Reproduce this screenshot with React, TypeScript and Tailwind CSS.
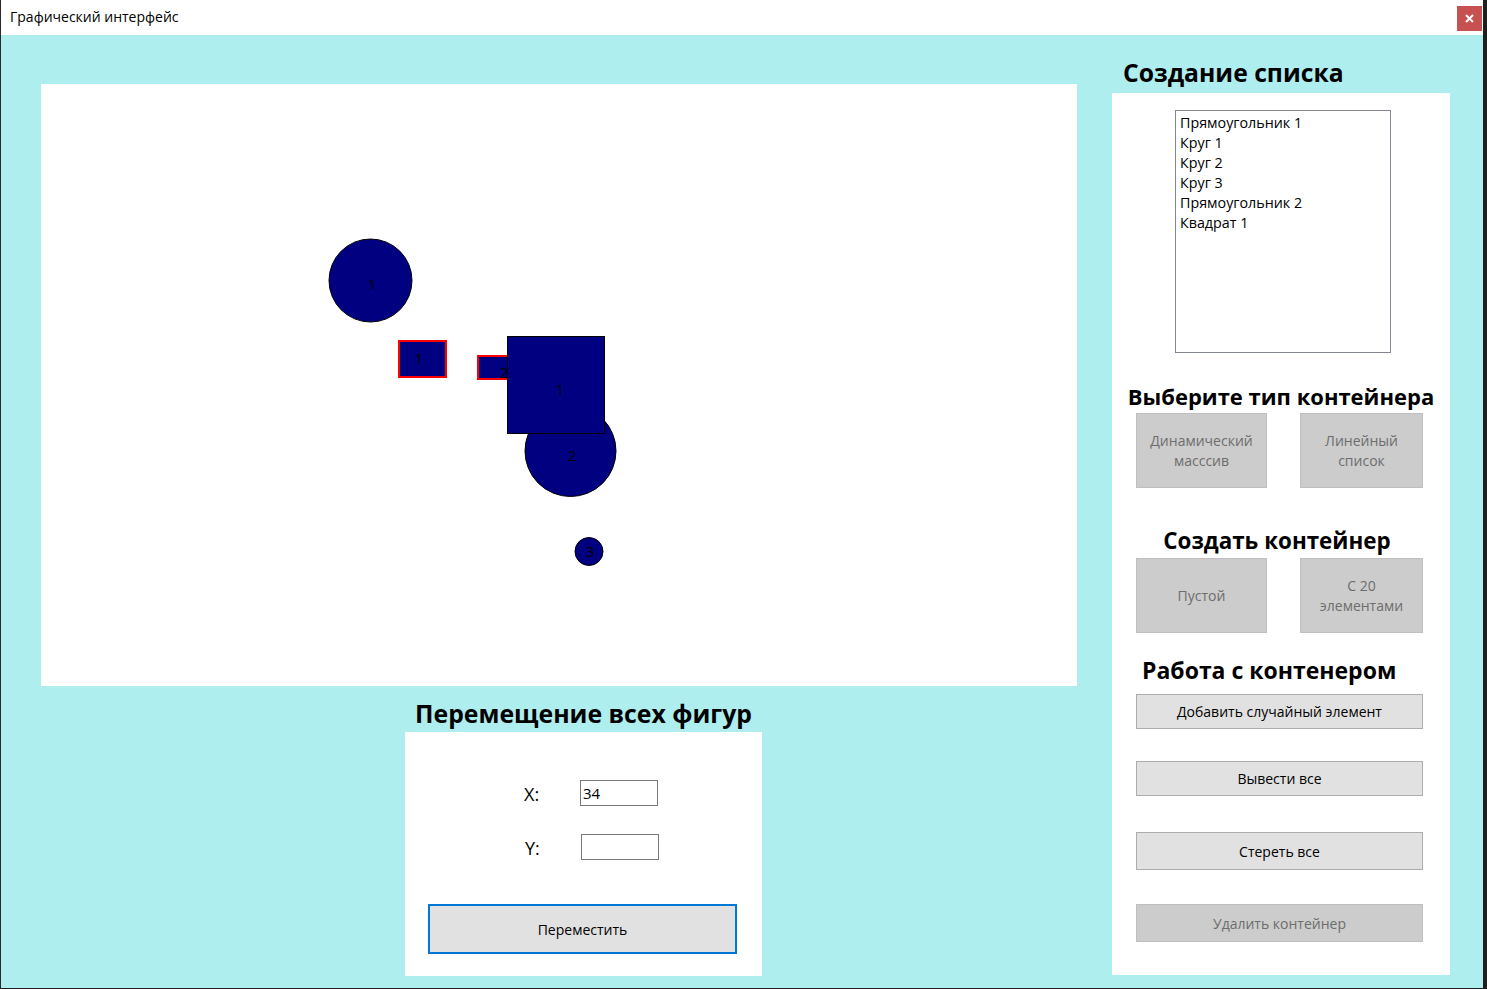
import React from "react";

const F = "font-['Open_Sans',sans-serif]";

function Canvas() {
  const label = (x: number, y: number, t: string) => (
    <text x={x} y={y} fontSize="15" fill="#000" textAnchor="middle" fontFamily="Open Sans, sans-serif">
      {t}
    </text>
  );
  return (
    <svg width="1036" height="602" viewBox="0 0 1036 602">
      <rect x="358" y="257" width="47" height="36" fill="#000080" stroke="#ff0000" strokeWidth="2" />
      {label(378, 280, "1")}
      <circle cx="329.5" cy="196.5" r="41.5" fill="#000080" stroke="#000" strokeWidth="1" />
      {label(331, 206, "1")}
      <circle cx="529.5" cy="367" r="45.5" fill="#000080" stroke="#000" strokeWidth="1" />
      {label(531, 377, "2")}
      <circle cx="548" cy="467.5" r="14" fill="#000080" stroke="#000" strokeWidth="1" />
      {label(549, 473, "3")}
      <rect x="437" y="272" width="52" height="23" fill="#000080" stroke="#ff0000" strokeWidth="2" />
      {label(463, 294, "2")}
      <rect x="466.5" y="252.5" width="97" height="97" fill="#000080" stroke="#000" strokeWidth="1" />
      {label(519, 311, "1")}
    </svg>
  );
}

function GrayBtn({ children, w }: { children: React.ReactNode; w: string }) {
  return (
    <div
      className={`${w} h-[75px] bg-[#cccccc] border border-[#bfbfbf] flex items-center justify-center text-center text-[14px] leading-[20px] text-[#6d6d6d]`}
    >
      {children}
    </div>
  );
}

export default function App() {
  const items = ["Прямоугольник 1", "Круг 1", "Круг 2", "Круг 3", "Прямоугольник 2", "Квадрат 1"];
  return (
    <div className={`w-[1487px] h-[989px] bg-[#1f1f1f] flex overflow-hidden ${F}`}>
      <div className="w-[1483px] h-[988px] flex flex-col border-l border-[#2a2a2a]">
        <div className="h-[35px] bg-white flex items-start justify-between">
          <div className="pl-[9px] pt-[6px] text-[14px] leading-[22px] text-black">Графический интерфейс</div>
          <div className="mt-[6px] mr-[1px] w-[25px] h-[25px] bg-[#c75050] flex items-center justify-center">
            <svg width="9" height="9" viewBox="0 0 9 9">
              <path d="M1 1 L8 8 M8 1 L1 8" stroke="#fff" strokeWidth="2" />
            </svg>
          </div>
        </div>
        <div className="flex-1 bg-[#afeeee] flex">
          <div className="w-[1111px] pl-[40px] pt-[49px] flex flex-col">
            <div className="w-[1036px] h-[602px] bg-white">
              <Canvas />
            </div>
            <div className="ml-[364px] w-[357px] flex flex-col">
              <div className="h-[46px] pt-[11px] text-[24.8px] leading-[32px] font-bold text-black text-center whitespace-nowrap">
                Перемещение всех фигур
              </div>
              <div className="h-[244px] bg-white flex flex-col">
                <div className="flex items-center mt-[48px] h-[26px]">
                  <div className="ml-[119px] mt-[3px] w-[56px] text-[18px] text-black">X:</div>
                  <div className="w-[78px] h-[26px] border border-[#7a7a7a] text-[15px] leading-[24px] pl-[2px] text-black">34</div>
                </div>
                <div className="flex items-center mt-[28px] h-[26px]">
                  <div className="ml-[120px] mt-[3px] w-[56px] text-[18px] text-black">Y:</div>
                  <div className="w-[78px] h-[26px] border border-[#7a7a7a]"></div>
                </div>
                <div className="ml-[23px] mt-[44px] w-[309px] h-[50px] border-2 border-[#0078d7] bg-[#e1e1e1] flex items-center justify-center text-[14px] text-black">
                  Переместить
                </div>
              </div>
            </div>
          </div>
          <div className="w-[338px] flex flex-col">
            <div className="h-[58px] pt-[22px] pl-[11px] text-[24.7px] leading-[32px] font-bold text-black whitespace-nowrap">
              Создание списка
            </div>
            <div className="h-[882px] bg-white flex flex-col">
              <div className="mt-[17px] ml-[63px] w-[216px] h-[243px] border border-[#828790] pt-[2px] pl-[4px]">
                {items.map((t) => (
                  <div key={t} className="text-[14.3px] leading-[20px] text-black">
                    {t}
                  </div>
                ))}
              </div>
              <div className="mt-[27px] h-[32px] text-[22px] leading-[32px] font-bold text-black text-center whitespace-nowrap">
                Выберите тип контейнера
              </div>
              <div className="mt-[1px] ml-[24px] flex gap-[33px]">
                <GrayBtn w="w-[131px]">
                  Динамический
                  <br />
                  масссив
                </GrayBtn>
                <GrayBtn w="w-[123px]">
                  Линейный
                  <br />
                  список
                </GrayBtn>
              </div>
              <div className="mt-[37px] h-[32px] pr-[8px] text-[22.4px] leading-[32px] font-bold text-black text-center whitespace-nowrap">
                Создать контейнер
              </div>
              <div className="mt-[1px] ml-[24px] flex gap-[33px]">
                <GrayBtn w="w-[131px]">Пустой</GrayBtn>
                <GrayBtn w="w-[123px]">
                  С 20
                  <br />
                  элементами
                </GrayBtn>
              </div>
              <div className="mt-[21px] h-[32px] pl-[30px] text-[23px] leading-[32px] font-bold text-black whitespace-nowrap">
                Работа с контенером
              </div>
              <div className="mt-[8px] ml-[24px] w-[287px] h-[35px] bg-[#e1e1e1] border border-[#adadad] flex items-center justify-center text-[14px] text-black">
                Добавить случайный элемент
              </div>
              <div className="mt-[32px] ml-[24px] w-[287px] h-[35px] bg-[#e1e1e1] border border-[#adadad] flex items-center justify-center text-[14px] text-black">
                Вывести все
              </div>
              <div className="mt-[36px] ml-[24px] w-[287px] h-[38px] bg-[#e1e1e1] border border-[#adadad] flex items-center justify-center text-[14px] text-black">
                Стереть все
              </div>
              <div className="mt-[34px] ml-[24px] w-[287px] h-[38px] bg-[#cccccc] border border-[#bfbfbf] flex items-center justify-center text-[14px] text-[#6d6d6d]">
                Удалить контейнер
              </div>
            </div>
          </div>
        </div>
      </div>
    </div>
  );
}
